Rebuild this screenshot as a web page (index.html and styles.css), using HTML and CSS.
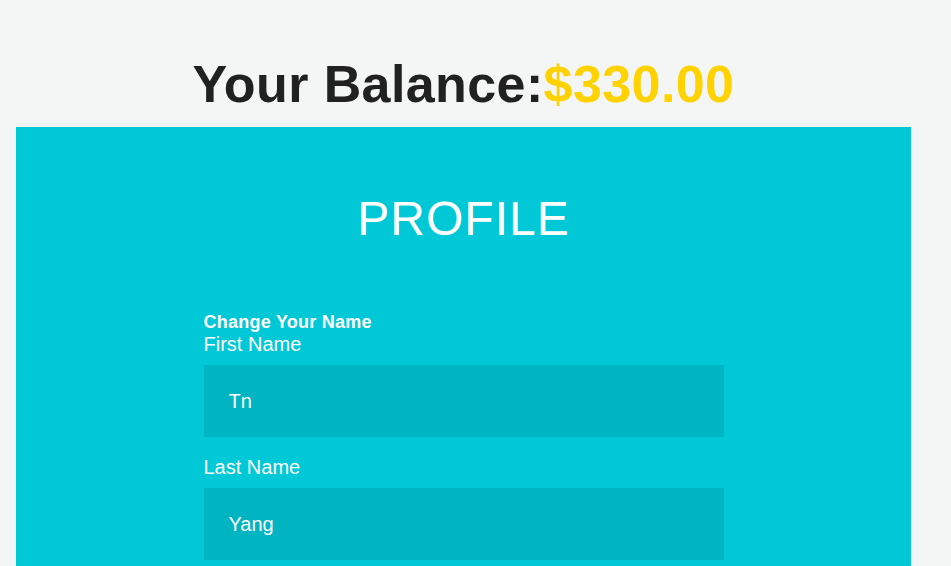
FILE: index.html
```html
<!DOCTYPE html>
<html lang="en">
<head>
<meta charset="utf-8">
<title>Profile</title>
<link rel="stylesheet" href="styles.css">
</head>
<body>
<div class="page">
  <h1 class="balance">Your Balance:<span class="amount">$330.00</span></h1>
  <section class="panel">
    <h2 class="panel-title">PROFILE</h2>
    <form class="name-form">
      <h4 class="form-heading">Change Your Name</h4>
      <label class="field-label" for="first">First Name</label>
      <input class="field-input" id="first" type="text" value="Tn">
      <label class="field-label field-label--spaced" for="last">Last Name</label>
      <input class="field-input" id="last" type="text" value="Yang">
    </form>
  </section>
</div>
</body>
</html>
```
FILE: styles.css
```css
html, body {
  margin: 0;
  padding: 0;
  background: #f4f5f5;
  font-family: "Liberation Sans", Arial, sans-serif;
}

.page {
  width: 895px;
  margin-left: 16px;
}

.balance {
  margin: 0 0 13px;
  padding-top: 54px;
  font-size: 52px;
  line-height: 60px;
  font-weight: 700;
  letter-spacing: 0.4px;
  color: #212121;
  text-align: center;
}

.amount {
  color: #ffd200;
}

.panel {
  background: #00c8d7;
  padding: 64px 0 40px;
  min-height: 400px;
}

.panel-title {
  margin: 0;
  font-size: 48px;
  line-height: 56px;
  font-weight: 400;
  letter-spacing: 1px;
  color: #ffffff;
  text-align: center;
}

.name-form {
  width: 520px;
  margin: 65px auto 0;
  display: flex;
  flex-direction: column;
}

.form-heading {
  margin: 0;
  font-size: 18px;
  line-height: 21px;
  font-weight: 700;
  letter-spacing: 0.25px;
  color: #ffffff;
}

.field-label {
  font-size: 20px;
  line-height: 23px;
  color: #ffffff;
  margin-bottom: 9px;
}

.field-label--spaced {
  margin-top: 19px;
}

.field-input {
  box-sizing: border-box;
  width: 520px;
  height: 72px;
  border: none;
  outline: none;
  padding: 0 25px;
  margin: 0;
  background: #00b4c2;
  color: #ffffff;
  font-family: "Liberation Sans", Arial, sans-serif;
  font-size: 20px;
}
```
